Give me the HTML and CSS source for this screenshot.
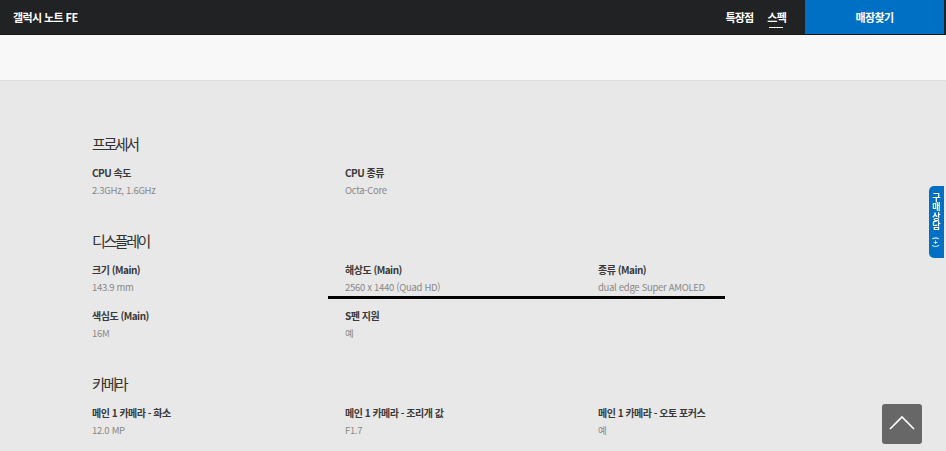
FILE: index.html
```html
<!DOCTYPE html>
<html lang="ko">
  <head>
    <meta charset="UTF-8" />
    <title>갤럭시 노트 FE 스펙</title>
    <link rel="stylesheet" href="styles.css">
  </head>
  <body>
    <div class="topbar">
      <div class="product-name">갤럭시 노트 FE</div>
      <div class="nav">
        <a class="nav-item">특장점</a>
        <a class="nav-item active">스펙</a>
      </div>
      <a class="store-btn">매장찾기</a>
    </div>
    <div class="sub-band"></div>

    <div class="spec-wrap">
      <div class="spec-section">
        <div class="spec-title">프로세서</div>
        <div class="spec-grid">
          <div class="spec-item">
            <div class="spec-label">CPU 속도</div>
            <div class="spec-value">2.3GHz, 1.6GHz</div>
          </div>
          <div class="spec-item">
            <div class="spec-label">CPU 종류</div>
            <div class="spec-value">Octa-Core</div>
          </div>
        </div>
      </div>

      <div class="spec-section">
        <div class="spec-title">디스플레이</div>
        <div class="spec-grid">
          <div class="spec-item">
            <div class="spec-label">크기 (Main)</div>
            <div class="spec-value">143.9 mm</div>
          </div>
          <div class="spec-item">
            <div class="spec-label">해상도 (Main)</div>
            <div class="spec-value">2560 x 1440 (Quad HD)</div>
          </div>
          <div class="spec-item">
            <div class="spec-label">종류 (Main)</div>
            <div class="spec-value">dual edge Super AMOLED</div>
          </div>
          <div class="spec-item">
            <div class="spec-label">색심도 (Main)</div>
            <div class="spec-value">16M</div>
          </div>
          <div class="spec-item">
            <div class="spec-label">S펜 지원</div>
            <div class="spec-value">예</div>
          </div>
        </div>
        <div class="drag-bar"></div>
      </div>

      <div class="spec-section">
        <div class="spec-title">카메라</div>
        <div class="spec-grid">
          <div class="spec-item">
            <div class="spec-label">메인 1 카메라 - 화소</div>
            <div class="spec-value">12.0 MP</div>
          </div>
          <div class="spec-item">
            <div class="spec-label">메인 1 카메라 - 조리개 값</div>
            <div class="spec-value">F1.7</div>
          </div>
          <div class="spec-item">
            <div class="spec-label">메인 1 카메라 - 오토 포커스</div>
            <div class="spec-value">예</div>
          </div>
        </div>
      </div>
    </div>

    <a class="side-tab">구매상담 <span class="plus">(+)</span></a>
    <a class="top-btn">
      <svg width="40" height="40" viewBox="0 0 40 40">
        <polyline points="8,25 20,13 32,25" fill="none" stroke="#fff" stroke-width="1.6" />
      </svg>
    </a>
  </body>
</html>
```

FILE: styles.css
```css
body {
  margin: 0;
  font-family: "Noto Sans CJK KR", "Noto Sans", sans-serif;
  background: #e8e8e8;
  color: #333;
  height: 451px;
  overflow: hidden;
}

.topbar {
  display: flex;
  align-items: center;
  height: 34px;
  background: #212224;
  border-bottom: 1px solid #161616;
}

.product-name {
  flex: 1;
  padding-left: 13px;
  color: #fff;
  font-size: 11px;
  font-weight: 700;
  letter-spacing: -0.6px;
}

.nav {
  display: flex;
  gap: 14px;
  margin-right: 19px;
}

.nav-item {
  position: relative;
  color: #fff;
  font-size: 11px;
  font-weight: 700;
  letter-spacing: -0.8px;
  line-height: 34px;
}

.nav-item.active::after {
  content: "";
  position: absolute;
  left: 2px;
  right: 3px;
  bottom: 6px;
  height: 1px;
  background: #fff;
}

.store-btn {
  width: 139px;
  height: 34px;
  line-height: 34px;
  background: #0070c4;
  color: #fff;
  text-align: center;
  font-size: 11px;
  font-weight: 700;
  letter-spacing: -0.6px;
  margin-right: 2px;
}

.sub-band {
  height: 45px;
  background: #f8f8f8;
  border-bottom: 1px solid #dedede;
}

.spec-wrap {
  position: relative;
  padding: 53px 0 0 92px;
}

.spec-section {
  position: relative;
  margin-bottom: 32px;
}

.spec-title {
  font-size: 15px;
  line-height: 20px;
  letter-spacing: -2.4px;
  color: #333;
  margin-bottom: 11px;
}

.spec-grid {
  display: grid;
  grid-template-columns: repeat(3, 253px);
  row-gap: 12px;
}

.spec-label {
  font-size: 10px;
  font-weight: 700;
  line-height: 16px;
  color: #3a3a3a;
  letter-spacing: -0.5px;
}

.spec-value {
  font-size: 9.5px;
  line-height: 18px;
  color: #888;
  letter-spacing: -0.3px;
}

.drag-bar {
  position: absolute;
  left: 236px;
  top: 65px;
  width: 397px;
  height: 3px;
  background: #000;
}

.side-tab {
  position: fixed;
  right: 2px;
  top: 186px;
  width: 15px;
  height: 72px;
  box-sizing: border-box;
  padding-top: 7px;
  background: #0070c4;
  border-radius: 5px 0 0 5px;
  color: #fff;
  font-size: 9px;
  font-weight: 700;
  writing-mode: vertical-rl;
  line-height: 15px;
  letter-spacing: 0.5px;
}

.side-tab .plus {
  font-size: 7px;
  padding-top: 3px;
}

.top-btn {
  position: fixed;
  left: 882px;
  top: 404px;
  width: 40px;
  height: 40px;
  background: #676767;
  border-radius: 3px;
}

.top-btn svg {
  display: block;
}
```
